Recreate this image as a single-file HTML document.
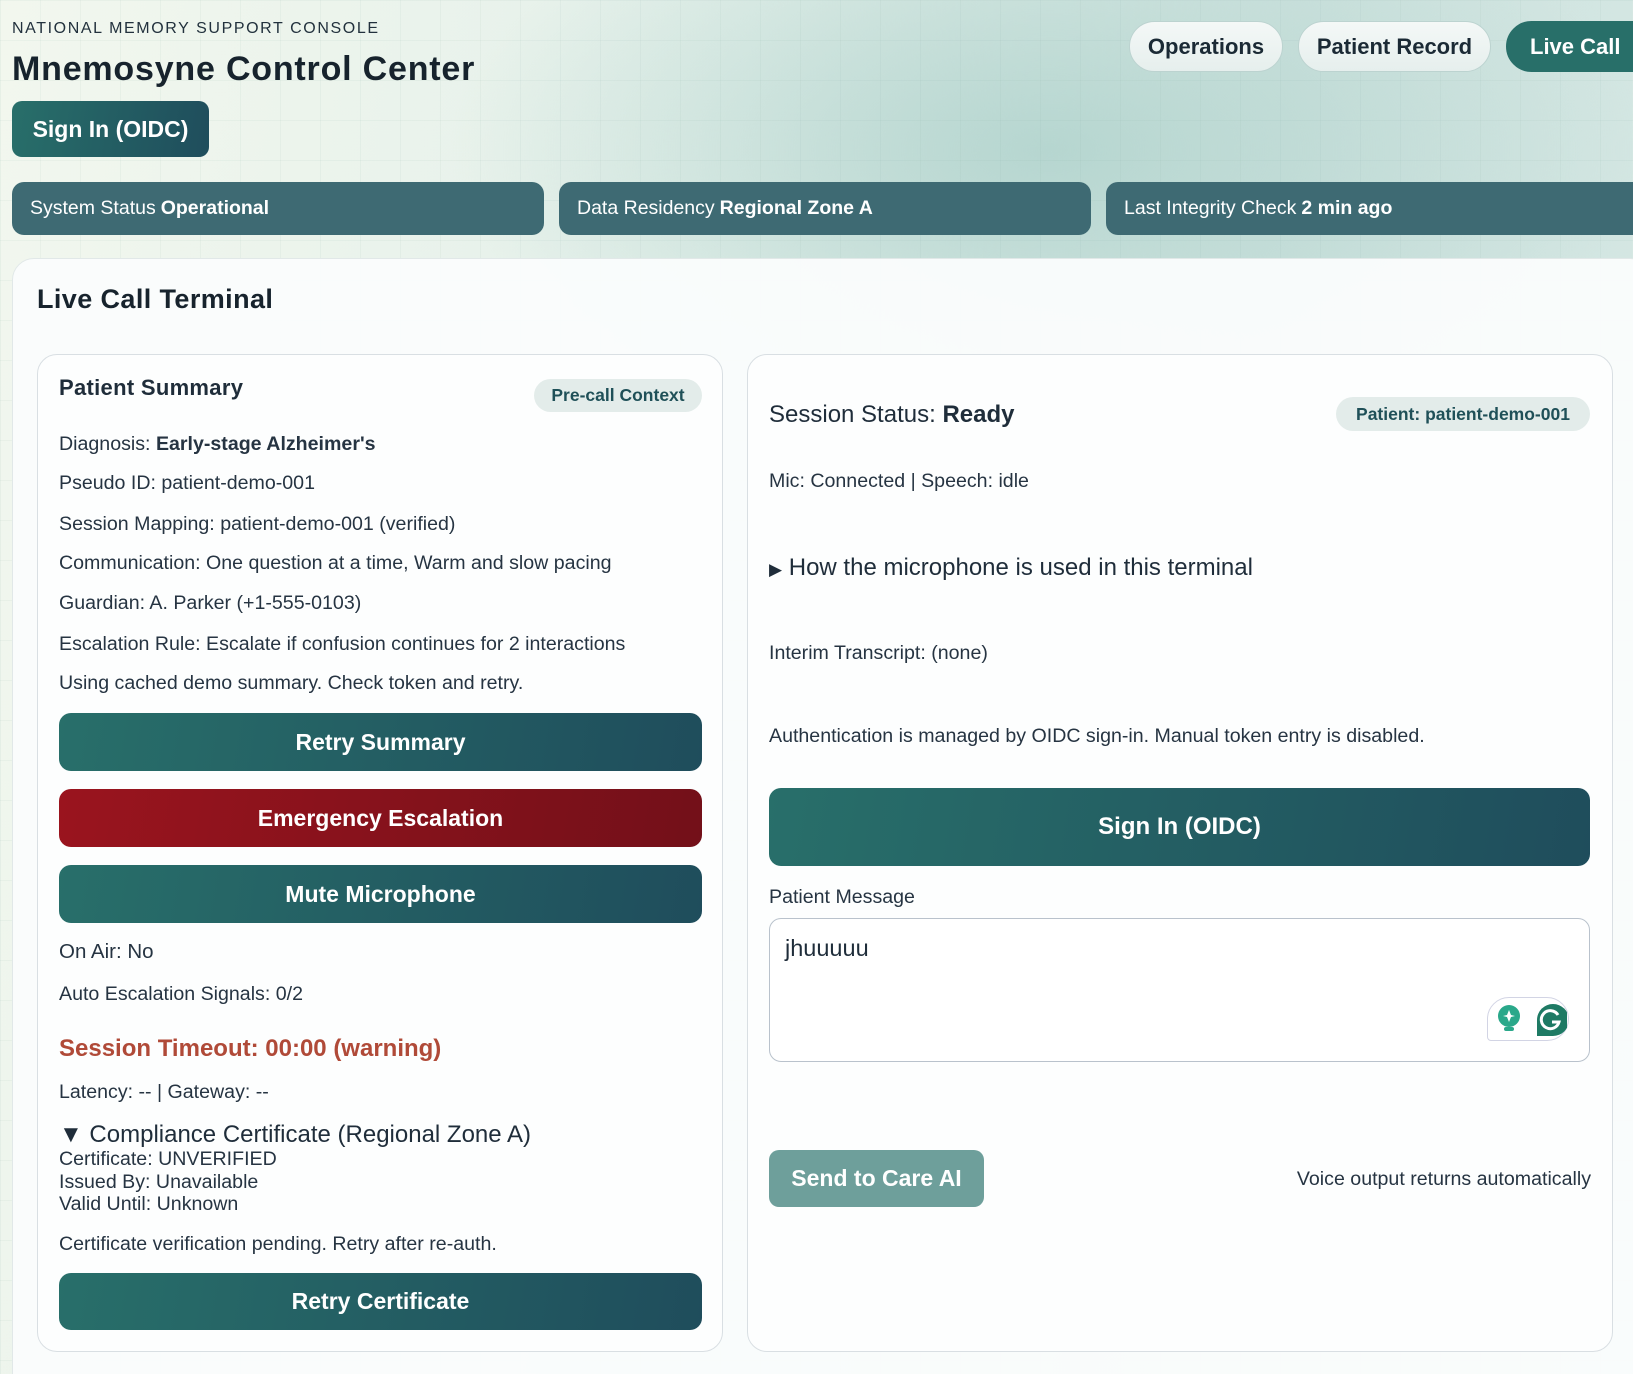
<!DOCTYPE html>
<html><head><meta charset="utf-8"><style>
*{box-sizing:border-box;margin:0;padding:0}
html,body{width:1633px;height:1374px;overflow:hidden}
body{font-family:"Liberation Sans",sans-serif;color:#1f2d3a;position:relative;
background:
linear-gradient(rgba(120,160,150,.07) 1px,transparent 1px) 0 0/40px 40px,
linear-gradient(90deg,rgba(120,160,150,.07) 1px,transparent 1px) 0 0/40px 40px,
radial-gradient(ellipse 600px 300px at 1050px 150px,#b6d6d0,transparent),
linear-gradient(100deg,#f2f7ee 0%,#e4f0ea 40%,#cfe3df 70%,#d6e8e4 100%);}
.a{position:absolute;white-space:nowrap}
.btn{position:absolute;border-radius:12px;color:#fff;font-weight:bold;display:flex;align-items:center;justify-content:center;background:linear-gradient(100deg,#286f6a,#1f4d5c)}
.bar{position:absolute;top:182px;height:53px;width:532px;border-radius:12px;background:#3e6a73;color:#fff;font-size:19.5px;padding-left:18px;display:flex;align-items:center}
.pill{position:absolute;top:21px;height:51px;border-radius:26px;border:1px solid #bcd3d0;background:linear-gradient(#f4f8f7,#e6efed);font-size:22px;font-weight:bold;display:flex;align-items:center;justify-content:center;color:#1b2a35}
.card{position:absolute;top:354px;height:998px;border:1.5px solid #d9dfe3;border-radius:20px;background:#fdfefe}
.l{font-size:19.6px;line-height:30px;color:#263442}
</style></head><body>
<div class="a" style="left:12px;top:20px;font-size:16px;letter-spacing:1.6px;color:#22313d">NATIONAL MEMORY SUPPORT CONSOLE</div>
<div class="a" style="left:12px;top:50px;font-size:34px;font-weight:bold;letter-spacing:.8px;color:#17232d">Mnemosyne Control Center</div>
<div class="btn" style="left:12px;top:101px;width:197px;height:56px;font-size:23px;border-radius:10px">Sign In (OIDC)</div>
<div class="pill" style="left:1129px;width:154px">Operations</div>
<div class="pill" style="left:1298px;width:193px">Patient Record</div>
<div class="pill" style="left:1506px;width:160px;background:#286f69;border-color:#286f69;color:#fff;justify-content:flex-start;padding-left:23px">Live Call</div>
<div class="bar" style="left:12px">System Status <b style="margin-left:5px">Operational</b></div>
<div class="bar" style="left:559px">Data Residency <b style="margin-left:5px">Regional Zone A</b></div>
<div class="bar" style="left:1106px;width:540px">Last Integrity Check <b style="margin-left:5px">2 min ago</b></div>
<div class="a" style="left:12px;top:258px;width:1640px;height:1140px;border-radius:22px;background:rgba(250,252,252,.97);border:1px solid #e1e8e8"></div>
<div class="a" style="left:37px;top:283px;font-size:27px;font-weight:bold;color:#17232d;line-height:32px;letter-spacing:.4px">Live Call Terminal</div>

<div class="card" style="left:37px;width:686px"></div>
<div class="a" style="left:59px;top:374px;font-size:22px;font-weight:bold;line-height:28px;letter-spacing:.3px">Patient Summary</div>
<div class="a" style="left:534px;top:379px;width:168px;height:33px;border-radius:17px;background:#e3ecea;color:#1f5058;font-size:17.5px;font-weight:bold;display:flex;align-items:center;justify-content:center">Pre-call Context</div>
<div class="a l" style="left:59px;top:429px">Diagnosis: <span style="font-weight:600">Early-stage Alzheimer's</span></div>
<div class="a l" style="left:59px;top:468px">Pseudo ID: patient-demo-001</div>
<div class="a l" style="left:59px;top:509px">Session Mapping: patient-demo-001 (verified)</div>
<div class="a l" style="left:59px;top:548px">Communication: One question at a time, Warm and slow pacing</div>
<div class="a l" style="left:59px;top:588px">Guardian: A. Parker (+1-555-0103)</div>
<div class="a l" style="left:59px;top:629px">Escalation Rule: Escalate if confusion continues for 2 interactions</div>
<div class="a l" style="left:59px;top:668px">Using cached demo summary. Check token and retry.</div>
<div class="btn" style="left:59px;top:713px;width:643px;height:58px;font-size:23px">Retry Summary</div>
<div class="btn" style="left:59px;top:789px;width:643px;height:58px;font-size:23px;background:linear-gradient(100deg,#9a141e,#731019)">Emergency Escalation</div>
<div class="btn" style="left:59px;top:865px;width:643px;height:58px;font-size:23px">Mute Microphone</div>
<div class="a l" style="left:59px;top:937px;font-size:20.5px">On Air: No</div>
<div class="a l" style="left:59px;top:979px">Auto Escalation Signals: 0/2</div>
<div class="a" style="left:59px;top:1034px;font-size:24px;font-weight:bold;color:#b04a38;line-height:30px">Session Timeout: 00:00 (warning)</div>
<div class="a l" style="left:59px;top:1077px">Latency: -- | Gateway: --</div>
<div class="a" style="left:59px;top:1120px;font-size:24px;line-height:30px">▼ Compliance Certificate (Regional Zone A)</div>
<div class="a" style="left:59px;top:1148px;font-size:19.6px;line-height:22.5px;color:#263442">Certificate: UNVERIFIED<br>Issued By: Unavailable<br>Valid Until: Unknown</div>
<div class="a l" style="left:59px;top:1229px">Certificate verification pending. Retry after re-auth.</div>
<div class="btn" style="left:59px;top:1273px;width:643px;height:57px;font-size:23px">Retry Certificate</div>

<div class="card" style="left:747px;width:866px"></div>
<div class="a" style="left:769px;top:400px;font-size:24px;line-height:30px">Session Status: <b>Ready</b></div>
<div class="a" style="left:1336px;top:397px;width:254px;height:34px;border-radius:17px;background:#e3ecea;color:#1f5058;font-size:17.5px;font-weight:bold;display:flex;align-items:center;justify-content:center">Patient: patient-demo-001</div>
<div class="a l" style="left:769px;top:466px">Mic: Connected | Speech: idle</div>
<div class="a" style="left:769px;top:553px;font-size:24px;line-height:30px"><span style="font-size:17px">▶</span> How the microphone is used in this terminal</div>
<div class="a l" style="left:769px;top:638px">Interim Transcript: (none)</div>
<div class="a l" style="left:769px;top:721px">Authentication is managed by OIDC sign-in. Manual token entry is disabled.</div>
<div class="btn" style="left:769px;top:788px;width:821px;height:78px;font-size:24px">Sign In (OIDC)</div>
<div class="a l" style="left:769px;top:882px">Patient Message</div>
<div class="a" style="left:769px;top:918px;width:821px;height:144px;border:1.5px solid #b9c2cc;border-radius:12px;background:#fff"></div>
<div class="a" style="left:785px;top:933px;font-size:23.5px;line-height:30px">jhuuuuu</div>
<div class="a" style="left:1487px;top:997px;width:82px;height:44px;border:1.5px solid #d2d4e4;border-radius:22px 22px 22px 4px;background:#fff"></div>
<svg class="a" style="left:1497px;top:1004px" width="70" height="32" viewBox="0 0 70 32">
<circle cx="12" cy="12" r="11" fill="#2aa88a"/><rect x="7" y="23" width="10" height="4" rx="2" fill="#2aa88a"/>
<path d="M12 6 L14 11 L18 12 L14 13 L12 18 L10 13 L6 12 L10 11Z" fill="#fff"/>
<path d="M40 32 V16 A16 16 0 1 1 56 32 Z" fill="#1e7a64"/>
<path d="M61 11 A9 9 0 1 0 62 18 H55" fill="none" stroke="#fff" stroke-width="3"/>
</svg>
<div class="btn" style="left:769px;top:1150px;width:215px;height:57px;font-size:23px;background:#6e9f9b;border-radius:10px">Send to Care AI</div>
<div class="a l" style="right:42px;top:1164px">Voice output returns automatically</div>
</body></html>
